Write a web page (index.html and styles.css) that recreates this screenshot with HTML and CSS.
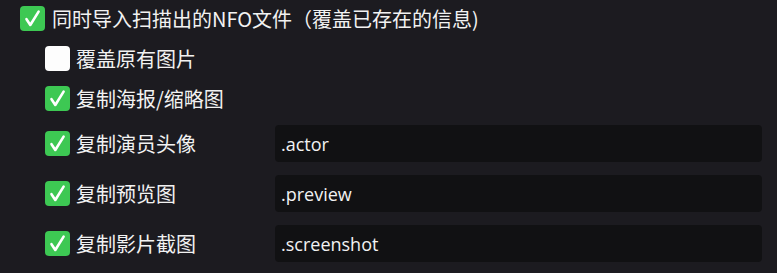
FILE: index.html
```html
<!DOCTYPE html>
<html lang="zh-CN">
<head>
    <meta charset="UTF-8">
    <title>NFO 导入设置</title>
    <link rel="stylesheet" href="styles.css">
</head>
<body>
    <div class="options">
        <div class="row top">
            <span class="box checked">
                <svg viewBox="0 0 25 25"><path d="M6.5 13.2 L10.3 19 L18.6 5.6"/></svg>
            </span>
            <span class="label">同时导入扫描出的NFO文件（覆盖已存在的信息)</span>
        </div>
        <div class="row sub">
            <span class="box"></span>
            <span class="label">覆盖原有图片</span>
        </div>
        <div class="row sub">
            <span class="box checked">
                <svg viewBox="0 0 25 25"><path d="M6.5 13.2 L10.3 19 L18.6 5.6"/></svg>
            </span>
            <span class="label">复制海报/缩略图</span>
        </div>
        <div class="row sub field">
            <span class="box checked">
                <svg viewBox="0 0 25 25"><path d="M6.5 13.2 L10.3 19 L18.6 5.6"/></svg>
            </span>
            <span class="label">复制演员头像</span>
            <input class="suffix" type="text" value=".actor">
        </div>
        <div class="row sub field">
            <span class="box checked">
                <svg viewBox="0 0 25 25"><path d="M6.5 13.2 L10.3 19 L18.6 5.6"/></svg>
            </span>
            <span class="label">复制预览图</span>
            <input class="suffix" type="text" value=".preview">
        </div>
        <div class="row sub field">
            <span class="box checked">
                <svg viewBox="0 0 25 25"><path d="M6.5 13.2 L10.3 19 L18.6 5.6"/></svg>
            </span>
            <span class="label">复制影片截图</span>
            <input class="suffix" type="text" value=".screenshot">
        </div>
    </div>
</body>
</html>
```

FILE: styles.css
```css
body {
    margin: 0;
    padding: 0;
    background: #1c1b20;
    color: #f2f2f2;
    font-family: "Noto Sans CJK SC", "Noto Sans", sans-serif;
    font-size: 20px;
}

.options {
    display: flex;
    flex-direction: column;
    gap: 3px;
    padding-right: 15px;
}

.row {
    display: flex;
    align-items: center;
    height: 37px;
}

.row.top {
    padding-left: 20px;
}

.row.sub {
    padding-left: 45px;
}

.row.field {
    margin-top: 5px;
}

.row.field + .row.field {
    margin-top: 10px;
}

.box {
    width: 25px;
    height: 25px;
    flex: none;
    border-radius: 4px;
    background: #fdfdfd;
    margin-right: 7px;
}

.box.checked {
    background: #3dc853;
}

.box svg {
    display: block;
    width: 25px;
    height: 25px;
}

.box svg path {
    fill: none;
    stroke: #fff;
    stroke-width: 2.6;
    stroke-linecap: round;
    stroke-linejoin: round;
}

.label {
    line-height: 1;
    white-space: nowrap;
}

.row.sub .label {
    margin-left: -1px;
}

.field .label {
    width: 199px;
    flex: none;
}

.suffix {
    flex: 1;
    min-width: 0;
    height: 37px;
    box-sizing: border-box;
    margin: 0;
    padding: 0 6px;
    border: none;
    border-radius: 4px;
    background: #111113;
    color: #f2f2f2;
    font-family: "Open Sans", "Noto Sans", sans-serif;
    font-size: 18px;
    outline: none;
}
```
